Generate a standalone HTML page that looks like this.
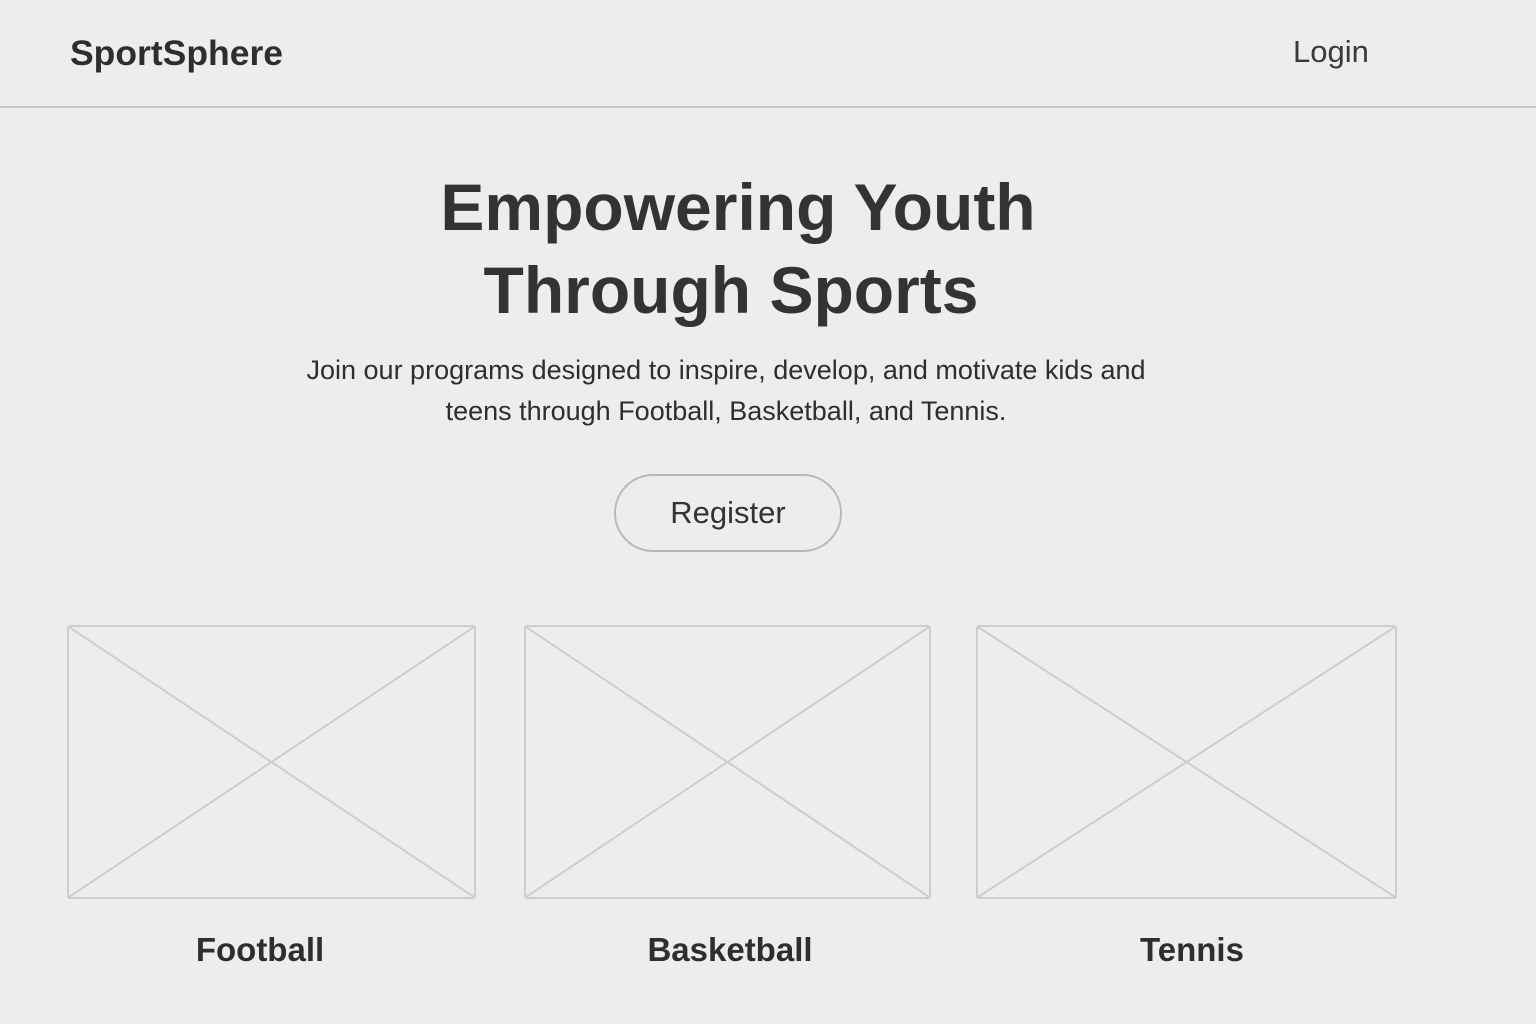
<!DOCTYPE html>
<html><head><style>
body{margin:0;width:1536px;height:1024px;background:#ededed;font-family:"Liberation Sans",sans-serif;color:#333;position:relative;overflow:hidden}
.a{position:absolute;white-space:nowrap}
.c{transform:translateX(-50%)}
.card{position:absolute;top:625px;height:274px;border:2px solid #cdcdcd;box-sizing:border-box;border-radius:3px}
.card svg{position:absolute;left:0;top:0;width:100%;height:100%}
.lbl{position:absolute;top:931px;font-size:33px;font-weight:bold;transform:translateX(-50%);color:#2e2e2e}
</style></head><body>
<div class="a" style="left:70px;top:33px;font-size:35.5px;font-weight:bold;color:#2e2e2e">SportSphere</div>
<div class="a" style="left:1293px;top:34px;font-size:31px;color:#3a3a3a">Login</div>
<div class="a" style="left:0;top:106px;width:1536px;height:2px;background:#c6c6c6"></div>
<div class="a c" style="left:738px;top:169px;font-size:66px;font-weight:bold;color:#333">Empowering Youth</div>
<div class="a c" style="left:731px;top:252px;font-size:66px;font-weight:bold;color:#333">Through Sports</div>
<div class="a c" style="left:726px;top:350px;font-size:27px;line-height:41px;text-align:center;color:#2e2e2e">Join our programs designed to inspire, develop, and motivate kids and<br>teens through Football, Basketball, and Tennis.</div>
<div class="a" style="left:614px;top:474px;width:228px;height:78px;border:2px solid #b8b8b8;border-radius:40px;box-sizing:border-box;text-align:center;line-height:74px;font-size:31px;color:#333">Register</div>
<div class="card" style="left:67px;width:409px"><svg viewBox="0 0 100 100" preserveAspectRatio="none"><path d="M0 0L100 100M100 0L0 100" stroke="#cdcdcd" stroke-width="2" vector-effect="non-scaling-stroke"/></svg></div>
<div class="card" style="left:524px;width:407px"><svg viewBox="0 0 100 100" preserveAspectRatio="none"><path d="M0 0L100 100M100 0L0 100" stroke="#cdcdcd" stroke-width="2" vector-effect="non-scaling-stroke"/></svg></div>
<div class="card" style="left:976px;width:421px"><svg viewBox="0 0 100 100" preserveAspectRatio="none"><path d="M0 0L100 100M100 0L0 100" stroke="#cdcdcd" stroke-width="2" vector-effect="non-scaling-stroke"/></svg></div>
<div class="lbl" style="left:260px">Football</div>
<div class="lbl" style="left:730px">Basketball</div>
<div class="lbl" style="left:1192px">Tennis</div>
</body></html>
